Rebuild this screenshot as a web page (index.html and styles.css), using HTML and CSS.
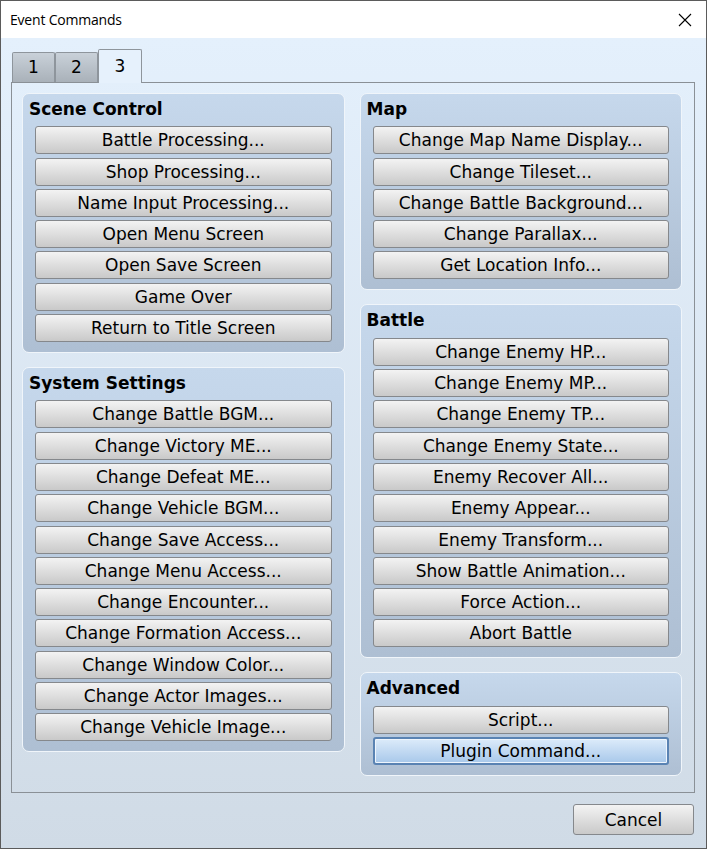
FILE: index.html
```html
<!DOCTYPE html>
<html lang="en">
<head>
    <meta charset="UTF-8">
    <title>Event Commands</title>
    <link rel="stylesheet" href="styles.css">
</head>
<body>
    <div class="window">
        <div class="titlebar">
            <span class="title">Event Commands</span>
            <svg class="close" width="14" height="14" viewBox="0 0 14 14">
                <path d="M1 1 L13 13 M13 1 L1 13" stroke="#000" stroke-width="1.1" fill="none"/>
            </svg>
        </div>
        <div class="client">
            <div class="tabs">
                <div class="tab">1</div>
                <div class="tab">2</div>
                <div class="tab active">3</div>
            </div>
            <div class="panel">
                <div class="column">
                    <div class="group">
                        <div class="group-title">Scene Control</div>
                        <button class="cmd">Battle Processing...</button>
                        <button class="cmd">Shop Processing...</button>
                        <button class="cmd">Name Input Processing...</button>
                        <button class="cmd">Open Menu Screen</button>
                        <button class="cmd">Open Save Screen</button>
                        <button class="cmd">Game Over</button>
                        <button class="cmd">Return to Title Screen</button>
                    </div>
                    <div class="group">
                        <div class="group-title">System Settings</div>
                        <button class="cmd">Change Battle BGM...</button>
                        <button class="cmd">Change Victory ME...</button>
                        <button class="cmd">Change Defeat ME...</button>
                        <button class="cmd">Change Vehicle BGM...</button>
                        <button class="cmd">Change Save Access...</button>
                        <button class="cmd">Change Menu Access...</button>
                        <button class="cmd">Change Encounter...</button>
                        <button class="cmd">Change Formation Access...</button>
                        <button class="cmd">Change Window Color...</button>
                        <button class="cmd">Change Actor Images...</button>
                        <button class="cmd">Change Vehicle Image...</button>
                    </div>
                </div>
                <div class="column">
                    <div class="group">
                        <div class="group-title">Map</div>
                        <button class="cmd">Change Map Name Display...</button>
                        <button class="cmd">Change Tileset...</button>
                        <button class="cmd">Change Battle Background...</button>
                        <button class="cmd">Change Parallax...</button>
                        <button class="cmd">Get Location Info...</button>
                    </div>
                    <div class="group">
                        <div class="group-title">Battle</div>
                        <button class="cmd">Change Enemy HP...</button>
                        <button class="cmd">Change Enemy MP...</button>
                        <button class="cmd">Change Enemy TP...</button>
                        <button class="cmd">Change Enemy State...</button>
                        <button class="cmd">Enemy Recover All...</button>
                        <button class="cmd">Enemy Appear...</button>
                        <button class="cmd">Enemy Transform...</button>
                        <button class="cmd">Show Battle Animation...</button>
                        <button class="cmd">Force Action...</button>
                        <button class="cmd">Abort Battle</button>
                    </div>
                    <div class="group">
                        <div class="group-title">Advanced</div>
                        <button class="cmd">Script...</button>
                        <button class="cmd focused">Plugin Command...</button>
                    </div>
                </div>
            </div>
            <div class="footer">
                <button class="cmd cancel">Cancel</button>
            </div>
        </div>
    </div>
</body>
</html>
```

FILE: styles.css
```css
/* RPG Maker style command dialog */
body {
    margin: 0;
    font-family: "DejaVu Sans", sans-serif;
}

.window {
    width: 707px;
    height: 849px;
    box-sizing: border-box;
    border: 1px solid #5b5b5b;
    display: flex;
    flex-direction: column;
}

.titlebar {
    height: 37px;
    background: #ffffff;
    display: flex;
    align-items: center;
    justify-content: space-between;
    padding: 0 14px 0 9px;
    flex-shrink: 0;
}

.title {
    font-family: "Open Sans", sans-serif;
    font-size: 14px;
    letter-spacing: -0.2px;
    color: #000;
}

.client {
    flex: 1;
    background: linear-gradient(#e4f0fc, #d0dbe6);
    padding: 11px 11px 0 10px;
    display: flex;
    flex-direction: column;
}

.tabs {
    display: flex;
    align-items: flex-end;
    height: 33px;
    padding-left: 1px;
}

.tab {
    width: 43px;
    height: 30px;
    box-sizing: border-box;
    border: 1px solid #8e959c;
    border-bottom: none;
    background: linear-gradient(#c9d1d9, #a9b1b9);
    font-size: 17px;
    line-height: 28px;
    text-align: center;
    border-radius: 2px 2px 0 0;
}

.tab.active {
    width: 44px;
    height: 34px;
    background: #e6f1fc;
    margin-bottom: -1px;
    position: relative;
    z-index: 1;
    line-height: 32px;
}

.panel {
    height: 711px;
    box-sizing: border-box;
    border: 1px solid #8a9096;
    padding: 10px 12px 0 10px;
    display: flex;
    gap: 15px;
}

.column {
    flex: 1;
    display: flex;
    flex-direction: column;
    gap: 14px;
}

.group {
    background: linear-gradient(#c6d8ec, #aebfd3);
    border: 1px solid #f0f5fa;
    border-radius: 7px;
    padding: 0 12px 10px 12px;
    display: flex;
    flex-direction: column;
    gap: 3.3px;
}

.group-title {
    font-weight: bold;
    font-size: 17px;
    height: 29px;
    line-height: 31px;
    margin-left: -6px;
    color: #000;
}

.cmd {
    height: 28px;
    box-sizing: border-box;
    border: 1px solid #85888c;
    border-radius: 3px;
    background: linear-gradient(#f3f3f3, #c9c9c9);
    font-family: "DejaVu Sans", sans-serif;
    font-size: 17px;
    color: #000;
    padding: 0;
    cursor: pointer;
}

.cmd.focused {
    border: 2px solid #5a83b3;
    box-shadow: inset 0 0 0 1px #eef5fd;
    background: linear-gradient(#dcebfa, #a8c8ea);
}

.footer {
    display: flex;
    justify-content: flex-end;
    padding-top: 11px;
    padding-right: 1px;
}

.cancel {
    width: 121px;
    height: 31px;
}
```
